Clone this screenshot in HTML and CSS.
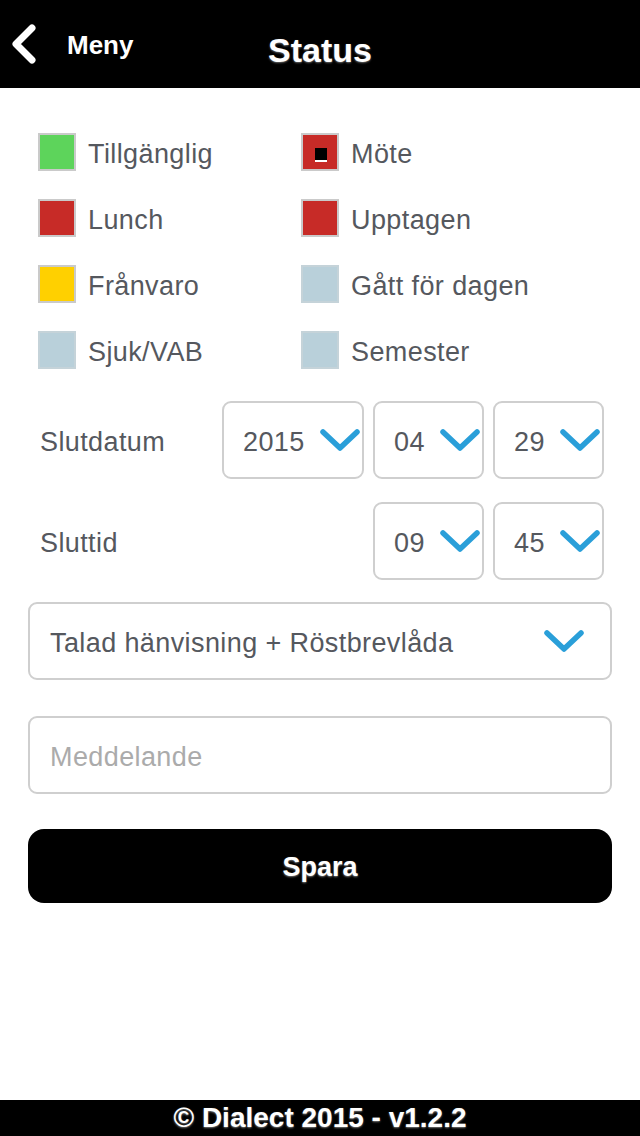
FILE: index.html
```html
<!DOCTYPE html>
<html lang="sv">
<head>
<meta charset="utf-8">
<title>Status</title>
<link rel="stylesheet" href="styles.css">
</head>
<body>
<header class="topbar">
  <a class="back">
    <svg class="back-icon" width="32" height="44" viewBox="0 0 32 44"><polyline points="24,6 8,22 24,38" fill="none" stroke="#fff" stroke-width="7" stroke-linecap="round" stroke-linejoin="round"/></svg>
    <span class="back-label">Meny</span>
  </a>
  <h1 class="title">Status</h1>
  <span class="spacer"></span>
</header>
<main class="content">
  <ul class="status-grid">
    <li class="status"><span class="swatch swatch-green"></span><span class="status-label">Tillgänglig</span></li>
    <li class="status"><span class="swatch swatch-red"><span class="marker"></span></span><span class="status-label">Möte</span></li>
    <li class="status"><span class="swatch swatch-red"></span><span class="status-label">Lunch</span></li>
    <li class="status"><span class="swatch swatch-red"></span><span class="status-label">Upptagen</span></li>
    <li class="status"><span class="swatch swatch-yellow"></span><span class="status-label">Frånvaro</span></li>
    <li class="status"><span class="swatch swatch-gray"></span><span class="status-label">Gått för dagen</span></li>
    <li class="status"><span class="swatch swatch-gray"></span><span class="status-label">Sjuk/VAB</span></li>
    <li class="status"><span class="swatch swatch-gray"></span><span class="status-label">Semester</span></li>
  </ul>

  <div class="field-row field-row-date">
    <span class="field-label">Slutdatum</span>
    <div class="selects">
      <div class="select select-wide"><span class="select-value">2015</span><svg class="chev" width="40" height="24" viewBox="0 0 40 24"><polyline points="3,4 20,20 37,4" fill="none" stroke="#2a9fd9" stroke-width="5.5" stroke-linecap="round" stroke-linejoin="round"/></svg></div>
      <div class="select"><span class="select-value">04</span><svg class="chev" width="40" height="24" viewBox="0 0 40 24"><polyline points="3,4 20,20 37,4" fill="none" stroke="#2a9fd9" stroke-width="5.5" stroke-linecap="round" stroke-linejoin="round"/></svg></div>
      <div class="select"><span class="select-value">29</span><svg class="chev" width="40" height="24" viewBox="0 0 40 24"><polyline points="3,4 20,20 37,4" fill="none" stroke="#2a9fd9" stroke-width="5.5" stroke-linecap="round" stroke-linejoin="round"/></svg></div>
    </div>
  </div>

  <div class="field-row field-row-time">
    <span class="field-label">Sluttid</span>
    <div class="selects">
      <div class="select"><span class="select-value">09</span><svg class="chev" width="40" height="24" viewBox="0 0 40 24"><polyline points="3,4 20,20 37,4" fill="none" stroke="#2a9fd9" stroke-width="5.5" stroke-linecap="round" stroke-linejoin="round"/></svg></div>
      <div class="select"><span class="select-value">45</span><svg class="chev" width="40" height="24" viewBox="0 0 40 24"><polyline points="3,4 20,20 37,4" fill="none" stroke="#2a9fd9" stroke-width="5.5" stroke-linecap="round" stroke-linejoin="round"/></svg></div>
    </div>
  </div>

  <div class="select select-full"><span class="select-value">Talad hänvisning + Röstbrevlåda</span><svg class="chev" width="40" height="24" viewBox="0 0 40 24"><polyline points="3,4 20,20 37,4" fill="none" stroke="#2a9fd9" stroke-width="5.5" stroke-linecap="round" stroke-linejoin="round"/></svg></div>

  <input class="message" type="text" placeholder="Meddelande">

  <button class="save" type="button">Spara</button>
</main>
<footer class="footer">© Dialect 2015 - v1.2.2</footer>
</body>
</html>
```

FILE: styles.css
```css
html, body {
  margin: 0;
  padding: 0;
  height: 100%;
}

body {
  display: flex;
  flex-direction: column;
  background: #fff;
  font-family: "Liberation Sans", Arial, Helvetica, sans-serif;
  color: #55585e;
}

.topbar {
  height: 88px;
  flex: 0 0 88px;
  background: #000;
  display: grid;
  grid-template-columns: 1fr auto 1fr;
  align-items: center;
  padding: 0 8px;
}

.back {
  display: flex;
  align-items: center;
  gap: 27px;
  color: #fff;
}

.back-icon {
  display: block;
}

.back-label {
  font-size: 26px;
  font-weight: bold;
  line-height: 1;
  padding-top: 2px;
}

.title {
  margin: 0;
  padding-top: 11px;
  font-size: 34px;
  line-height: 1;
  font-weight: bold;
  color: #fff;
  text-shadow: 0 1px 2px #666;
}

.content {
  flex: 1;
  padding: 45px 28px 0;
  display: flex;
  flex-direction: column;
}

.status-grid {
  list-style: none;
  margin: 0 0 32px;
  padding: 0 0 0 10px;
  display: grid;
  grid-template-columns: 263px 1fr;
  row-gap: 28px;
}

.status {
  display: flex;
  align-items: center;
  height: 38px;
}

.swatch {
  box-sizing: border-box;
  flex: 0 0 38px;
  width: 38px;
  height: 38px;
  border: 2px solid #cacaca;
  margin-right: 12px;
  position: relative;
}

.swatch-green { background: #5dd45b; }
.swatch-red { background: #c72b27; }
.swatch-yellow { background: #ffd000; }
.swatch-gray { background: #b9d0da; border-color: #c5d3d9; }

.marker {
  position: absolute;
  left: 12px;
  top: 13px;
  width: 12px;
  height: 12px;
  background: #000;
  border-bottom: 2px solid #fff;
}

.status-label {
  font-size: 27px;
  letter-spacing: 0.4px;
  padding-top: 4px;
}

.field-row {
  display: flex;
  align-items: center;
  justify-content: space-between;
  padding: 0 8px 0 12px;
}

.field-row-date {
  margin-bottom: 23px;
}

.field-row-time {
  margin-bottom: 22px;
}

.field-label {
  font-size: 27px;
  letter-spacing: 0.4px;
  padding-top: 4px;
}

.selects {
  display: flex;
  gap: 9px;
}

.select {
  box-sizing: border-box;
  width: 111px;
  height: 78px;
  border: 2px solid #cfcfcf;
  border-radius: 9px;
  display: flex;
  align-items: center;
  justify-content: space-between;
  padding: 0 2px 0 19px;
  background: #fff;
}

.select-wide {
  width: 142px;
}

.select-value {
  font-size: 27px;
  letter-spacing: 0.4px;
  padding-top: 4px;
}

.chev {
  display: block;
  flex: 0 0 auto;
}

.select-full {
  width: auto;
  padding: 0 26px 0 20px;
  margin-bottom: 36px;
}

.message {
  box-sizing: border-box;
  height: 78px;
  width: 100%;
  border: 2px solid #cfcfcf;
  border-radius: 9px;
  padding: 4px 20px 0;
  font-family: "Liberation Sans", Arial, Helvetica, sans-serif;
  font-size: 27px;
  letter-spacing: 0.4px;
  color: #55585e;
  margin: 0 0 35px;
  outline: none;
}

.message::placeholder {
  color: #ababab;
}

.save {
  height: 74px;
  width: 100%;
  border: none;
  border-radius: 16px;
  background: #000;
  color: #fff;
  padding-top: 4px;
  font-family: "Liberation Sans", Arial, Helvetica, sans-serif;
  font-size: 27px;
  font-weight: bold;
  text-shadow: 0 1px 2px #777;
}

.footer {
  flex: 0 0 36px;
  height: 36px;
  background: #000;
  color: #fff;
  text-align: center;
  font-size: 28px;
  font-weight: bold;
  line-height: 36px;
  text-shadow: 0 1px 2px #777;
}
```
